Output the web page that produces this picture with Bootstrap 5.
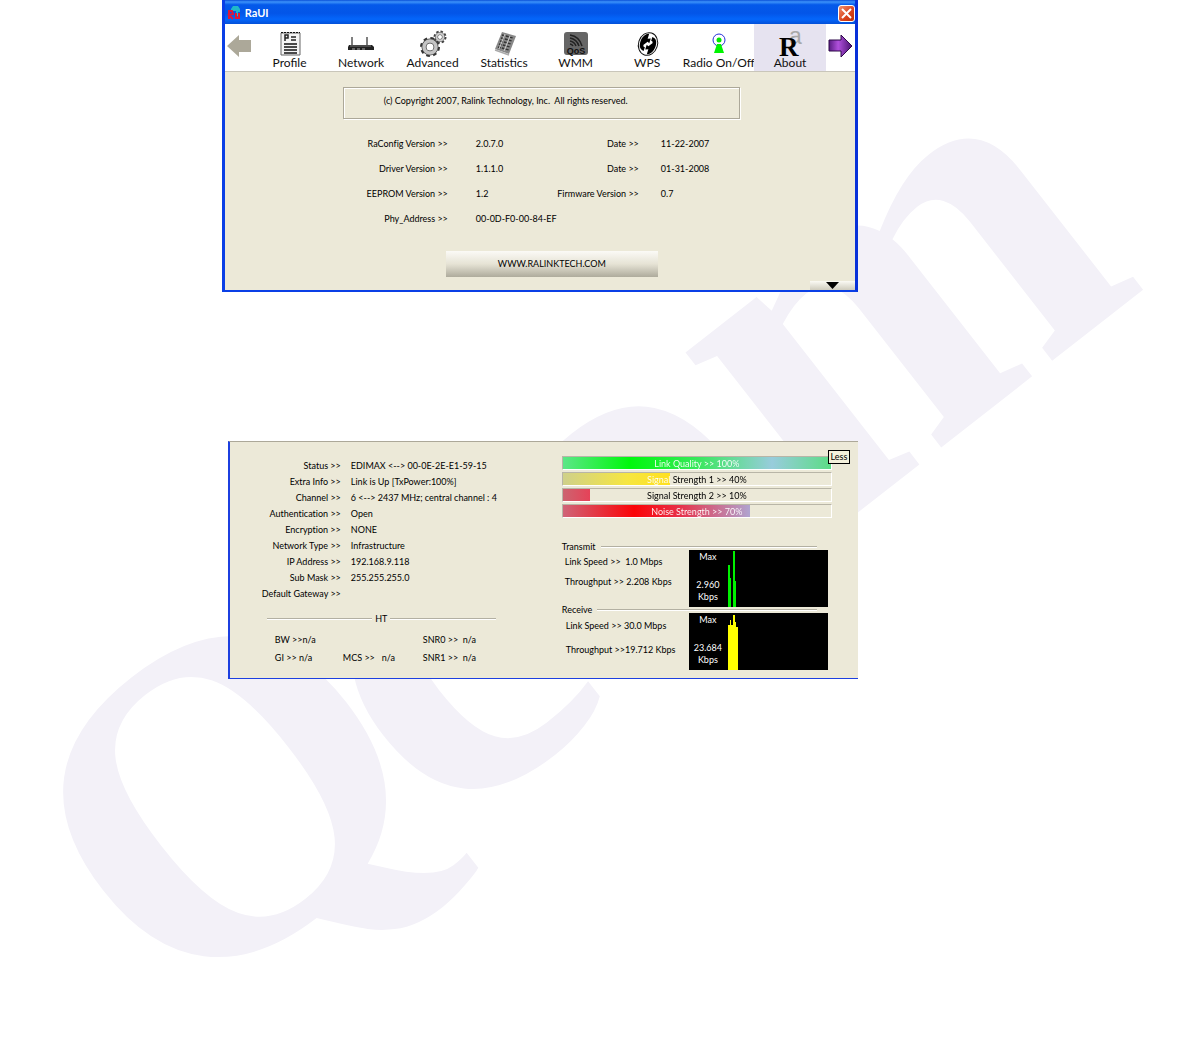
<!DOCTYPE html>
<html lang="en">
<head>
<meta charset="utf-8">
<meta name="viewport" content="width=device-width, initial-scale=1">
<title>RaUI</title>
<link rel="stylesheet" href="https://cdn.jsdelivr.net/npm/bootstrap@5.3.0/dist/css/bootstrap.min.css">
<style>
  body { background: #fff; font-family: Lato, "Open Sans", sans-serif; font-size: 9px; line-height: 16px; color: #000; font-variant-ligatures: none; }
  .page-area { min-height: 100vh; padding: 0 27.3% 0 18.8%; }
  .watermark { inset: 0; width: 100%; height: 1060px; z-index: 0; }
  .watermark text { font-family: "Liberation Serif", serif; font-weight: 700; fill: #f3f1f8; }
  .panels { z-index: 1; gap: 149px; min-width: 620px; }

  /* main window */
  .xp-window { background: #ece9d8; border: 3px solid #0a3fe6; border-top: 0; border-bottom-width: 2px; border-right-color: #0831d9; }
  .title-strip { height: 24px; padding: 2px 0 0 2px; background: linear-gradient(#0a50d8 0, #3c92fa 8%, #0459ea 20%, #0355e8 55%, #0466fb 80%, #0350d8 100%); color: #fff; font-weight: 700; font-size: 11px; }
  .close-btn { width: 17px; height: 17px; border: 1px solid #fff; border-radius: 3px; background: linear-gradient(135deg, #f0906c, #d9421c 60%, #c03008); }
  .tool-strip { background: #fff; height: 48px; border-bottom: 1px solid #c9c6ba; }
  .step-btn { width: 29px; height: 44px; border: 0; background: none; }
  .tool-btn { flex: 1 1 0; min-width: 0; border: 0; background: none; padding: 5px 0 0; font-size: 12px; line-height: 12px; white-space: nowrap; color: #111; }
  .tool-btn svg { width: 28px; height: 26px; overflow: visible; }
  .tool-btn.current { background: #e6e3f0; }
  .notice { width: 63%; height: 32px; margin: 15px auto 0 118px; border: 1px solid #aca899; box-shadow: 1px 1px 0 #fff, inset 1px 1px 0 #fff; padding: 5px 0 0 40px; }
  .versions { display: grid; grid-template-columns: minmax(0, 223fr) minmax(0, 104fr) minmax(0, 87fr) minmax(0, 216fr); line-height: 25px; margin-top: 12px; white-space: nowrap; }
  .versions dt, .facts dt { font-weight: 400; text-align: right; }
  .versions dd { margin: 0; padding-left: 28px; }
  .versions dd.near { padding-left: 22px; }
  .site-btn { display: block; width: 212px; height: 26px; border: 0; margin: 20px auto 0 221px; background: linear-gradient(#fbfaf6, #e6e3d5 50%, #aeab9c); }
  .drop-btn { display: block; width: 45px; height: 9px; margin: 4px 0 0 auto; border: 0; background: linear-gradient(#fbfaf4, #cfccbd); }

  /* status pane */
  .status-pane { background: #ece9d8; margin-left: 6px; border: solid #1c3fe0; border-width: 1px 0 1px 2px; border-top-color: #aca899; height: 238px; }
  .side-left { width: 332px; padding-top: 16px; }
  .side-right { flex: 1 1 0; padding: 14px 26px 0 0; }
  .facts { display: grid; grid-template-columns: 111px 1fr; margin: 0; white-space: nowrap; }
  .facts dd { margin: 0; padding-left: 10px; min-height: 16px; }
  .rule { height: 2px; flex: 1 1 0; background: linear-gradient(#b3b0a2 50%, #fff 50%); }
  .ht-head { margin: 9px 66px 0 37px; gap: 3px; }
  .ht-grid { display: grid; grid-template-columns: 68px 80px 1fr; line-height: 18px; margin: 4px 0 0 45px; white-space: pre; }
  .meter { height: 14px; margin-bottom: 2px; border: 1px solid #b8b5a7; border-right-color: #fff; border-bottom-color: #fff; background: #ece9d8; border-radius: 0; font-size: 9px; }
  .meter .progress-bar { background: var(--tone); }
  .meter-text { inset: 0; text-align: center; line-height: 13px; color: transparent; background: linear-gradient(90deg, #fff var(--v), #000 var(--v)); -webkit-background-clip: text; background-clip: text; }
  .tone-green { --tone: linear-gradient(90deg, #5ce688, #00f80c 25%, #38e85c 50%, #98ccdc 78%, #5cdc86); }
  .tone-yellow { --tone: linear-gradient(90deg, #cfd08a, #f6e640 60%, #ffe020); }
  .tone-red { --tone: linear-gradient(90deg, #cc6470, #e64258); }
  .tone-noise { --tone: linear-gradient(90deg, #d06478, #fb0408 38%, #e83048 62%, #b0a4d0); }
  .less-btn { top: 8px; right: 8px; width: 22px; height: 14px; border: 1px solid #000; background: #f4f1dc; padding: 0; line-height: 12px; }
  .flow-head { height: 6px; line-height: 6px; gap: 5px; margin-right: 15px; }
  .flow-first { margin-top: 26px; }
  .flow-text { flex: 1 1 0; white-space: pre; }
  .scope { width: 139px; height: 57px; background: #000; color: #fff; margin-right: 4px; line-height: 12px; text-align: center; }
  .scope-text { width: 38px; padding-top: 1px; }
  .flow-text.gap-a { padding: 4px 0 0 3px; }
  .flow-text.gap-b { padding: 5px 0 0 4px; }
</style>
</head>
<body>
<main class="page-area position-relative overflow-hidden">
  <svg class="watermark position-absolute" viewBox="0 0 1180 1060" preserveAspectRatio="xMinYMin slice" aria-hidden="true">
    <g transform="rotate(-38)"><text x="-489" y="914" font-size="452">Q</text><text x="-168" y="932" font-size="506">com</text></g>
  </svg>
  <div class="panels position-relative d-flex flex-column">
    <section class="xp-window">
      <header class="title-strip d-flex align-items-center">
        <svg width="14" height="16" viewBox="0 0 14 16" aria-hidden="true"><path d="M4 4l2-3h5l2 3v3h-2v4H9V6H4z" fill="#20b8c8"/><path d="M2 14V6h3l1 3-4 1 4 4M9 8v5h3V8" stroke="#e01838" stroke-width="2" fill="none"/></svg>
        <span class="ms-1 me-auto">RaUI</span>
        <button class="close-btn p-0 d-flex align-items-center justify-content-center" type="button" aria-label="Close"><svg width="11" height="11" viewBox="0 0 11 11"><path d="M1 1l9 9M10 1l-9 9" stroke="#fff" stroke-width="2"/></svg></button>
      </header>
      <nav class="tool-strip d-flex" aria-label="Sections">
        <button class="step-btn p-0" type="button" aria-label="Previous"><svg width="25" height="24" viewBox="0 0 25 24"><path d="M0 12L12 1v5h12v12H12v5z" fill="#aca899"/></svg></button>
        <button class="tool-btn" type="button">
          <svg viewBox="0 0 28 26" class="d-block mx-auto"><path d="M5 2h19v22H5z" fill="#f4f4f4" stroke="#666"/><path d="M5 1.500h19" stroke="#111" stroke-dasharray="2 1"/><path d="M9 10V4h3v3H9M15 6h5M15 9h5" fill="none" stroke="#222" stroke-width="1.500"/><path d="M8 13h13M8 16h13M8 19h13M8 22h13" stroke="#111" stroke-width="1.500"/></svg>
          Profile</button>
        <button class="tool-btn" type="button">
          <svg viewBox="0 0 28 26" class="d-block mx-auto"><path d="M5 6v9M20 6v9" stroke="#555" stroke-width="1.500"/><path d="M2 14h23l2 2v3H1v-3z" fill="#222"/><path d="M3 15h21" stroke="#777"/><path d="M5 18h3M10 18h3M15 18h3" stroke="#aaa"/></svg>
          Network</button>
        <button class="tool-btn" type="button">
          <svg viewBox="0 0 28 26" class="d-block mx-auto"><g fill="none"><circle cx="11" cy="16" r="8" stroke="#333" stroke-width="4" stroke-dasharray="3.300 3"/><circle cx="11" cy="16" r="6" stroke="#444" stroke-width="5"/><circle cx="11" cy="16" r="6" stroke="#c4c4c4" stroke-width="3.500"/><circle cx="21" cy="6" r="5" stroke="#444" stroke-width="3" stroke-dasharray="2.200 1.700"/><circle cx="21" cy="6" r="3.500" stroke="#555" stroke-width="3"/><circle cx="21" cy="6" r="3.500" stroke="#ccc" stroke-width="2"/></g></svg>
          Advanced</button>
        <button class="tool-btn" type="button">
          <svg viewBox="0 0 28 26" class="d-block mx-auto"><path d="M12 1l14 4-7 18-14-5z" fill="#888"/><path d="M12 4l11 3M11 7l11 3M10 10l11 3M9 13l11 3M8 16l11 3" stroke="#333" stroke-width="1.500" stroke-dasharray="3 1"/><path d="M15 3l-6 15M20 5l-6 15" stroke="#ccc"/><path d="M5 19l14 5" stroke="#aaa" stroke-width="1.500"/></svg>
          Statistics</button>
        <button class="tool-btn" type="button">
          <svg viewBox="0 0 28 26" class="d-block mx-auto"><rect x="2" y="1" width="24" height="23" rx="3" fill="#666"/><g fill="none" stroke="#222" stroke-width="1.500"><path d="M8 4a15 15 0 0112 11M8 7a12 12 0 019 8M8 10a8 8 0 016 5M8 13a4 4 0 013 2"/></g><text x="14" y="23" text-anchor="middle" font-family="Liberation Sans, sans-serif" font-size="9" font-weight="700" fill="#111">QoS</text></svg>
          WMM</button>
        <button class="tool-btn" type="button">
          <svg viewBox="0 0 28 26" class="d-block mx-auto"><g transform="translate(1 0) rotate(18 14 13)"><ellipse cx="14" cy="13" rx="9.500" ry="11.500" fill="#fff" stroke="#111"/><path d="M12 3C6 5 5 13 7 18c1 2 3 3 5 3v-4c-2 0-2-1-2-2l3-4 2 1V7l-3 1zM16 23c6-2 7-10 5-15-1-2-3-3-5-3v4c2 0 2 1 2 2l-3 4-2-1v5l3-1z" fill="#000"/></g></svg>
          WPS</button>
        <button class="tool-btn" type="button">
          <svg viewBox="0 0 28 26" class="d-block mx-auto"><circle cx="14" cy="9" r="6" fill="#fff" stroke="#2430d8"/><circle cx="14" cy="9" r="2.500" fill="#00e800"/><path d="M12 13h4l3 9H9z" fill="#00f400"/></svg>
          Radio On/Off</button>
        <button class="tool-btn current" type="button" aria-current="page">
          <svg viewBox="0 0 28 26" class="d-block mx-auto"><text x="13" y="13" font-family="Liberation Sans, sans-serif" font-size="23" fill="#a8a8a8">a</text><text x="3" y="25" font-family="Liberation Serif, serif" font-size="27" font-weight="700" fill="#000">R</text></svg>
          About</button>
        <button class="step-btn p-0" type="button" aria-label="Next"><svg width="25" height="24" viewBox="0 0 25 24"><defs><linearGradient id="violet"><stop offset="0" stop-color="#5a1c84"/><stop offset=".4" stop-color="#b050dc"/><stop offset="1" stop-color="#481070"/></linearGradient></defs><path d="M24 12L13 1v5H1v11h12v6z" fill="url(#violet)" stroke="#2c0848"/></svg></button>
      </nav>
      <p class="notice mb-0">(c) Copyright 2007, Ralink Technology, Inc.&nbsp; All rights reserved.</p>
      <dl class="versions mb-0">
        <dt>RaConfig Version &gt;&gt;</dt><dd>2.0.7.0</dd><dt>Date &gt;&gt;</dt><dd class="near">11-22-2007</dd>
        <dt>Driver Version &gt;&gt;</dt><dd>1.1.1.0</dd><dt>Date &gt;&gt;</dt><dd class="near">01-31-2008</dd>
        <dt>EEPROM Version &gt;&gt;</dt><dd>1.2</dd><dt>Firmware Version &gt;&gt;</dt><dd class="near">0.7</dd>
        <dt>Phy_Address &gt;&gt;</dt><dd>00-0D-F0-00-84-EF</dd>
      </dl>
      <button class="site-btn p-0" type="button">WWW.RALINKTECH.COM</button>
      <button class="drop-btn p-0" type="button" aria-label="Show status"><svg class="d-block mx-auto" width="13" height="7" viewBox="0 0 13 7"><path d="M0 0h13L6.500 7z"/></svg></button>
    </section>

    <section class="status-pane d-flex position-relative">
      <div class="side-left">
        <dl class="facts">
          <dt>Status &gt;&gt;</dt><dd>EDIMAX &lt;--&gt; 00-0E-2E-E1-59-15</dd>
          <dt>Extra Info &gt;&gt;</dt><dd>Link is Up [TxPower:100%]</dd>
          <dt>Channel &gt;&gt;</dt><dd>6 &lt;--&gt; 2437 MHz; central channel : 4</dd>
          <dt>Authentication &gt;&gt;</dt><dd>Open</dd>
          <dt>Encryption &gt;&gt;</dt><dd>NONE</dd>
          <dt>Network Type &gt;&gt;</dt><dd>Infrastructure</dd>
          <dt>IP Address &gt;&gt;</dt><dd>192.168.9.118</dd>
          <dt>Sub Mask &gt;&gt;</dt><dd>255.255.255.0</dd>
          <dt>Default Gateway &gt;&gt;</dt><dd></dd>
        </dl>
        <div class="ht-head d-flex align-items-center"><span class="rule"></span>HT<span class="rule"></span></div>
        <div class="ht-grid"><span>BW &gt;&gt;n/a</span><span></span><span>SNR0 &gt;&gt;  n/a</span><span>GI &gt;&gt; n/a</span><span>MCS &gt;&gt;   n/a</span><span>SNR1 &gt;&gt;  n/a</span></div>
      </div>
      <div class="side-right">
        <div class="progress meter tone-green position-relative" style="--v:100%"><div class="progress-bar" style="width:100%"></div><span class="meter-text position-absolute">Link Quality &gt;&gt; 100%</span></div>
        <div class="progress meter tone-yellow position-relative" style="--v:40%"><div class="progress-bar" style="width:40%"></div><span class="meter-text position-absolute">Signal Strength 1 &gt;&gt; 40%</span></div>
        <div class="progress meter tone-red position-relative" style="--v:10%"><div class="progress-bar" style="width:10%"></div><span class="meter-text position-absolute">Signal Strength 2 &gt;&gt; 10%</span></div>
        <div class="progress meter tone-noise position-relative" style="--v:70%"><div class="progress-bar" style="width:70%"></div><span class="meter-text position-absolute">Noise Strength &gt;&gt; 70%</span></div>
        <div class="flow-head flow-first d-flex align-items-center">Transmit<span class="rule"></span></div>
        <div class="d-flex">
          <div class="flow-text gap-a"><div class="mb-1">Link Speed &gt;&gt;  1.0 Mbps</div><div>Throughput &gt;&gt; 2.208 Kbps</div></div>
          <div class="scope d-flex"><div class="scope-text"><div class="mb-3">Max</div><div>2.960</div><div>Kbps</div></div><svg width="12" height="57" viewBox="0 0 12 57" aria-hidden="true"><path d="M1 57V15h2v13h1v29zM6 57V1h2v30h1v26z" fill="#00f000"/></svg></div>
        </div>
        <div class="flow-head d-flex align-items-center">Receive<span class="rule"></span></div>
        <div class="d-flex">
          <div class="flow-text gap-b"><div class="mb-2">Link Speed &gt;&gt; 30.0 Mbps</div><div>Throughput &gt;&gt;19.712 Kbps</div></div>
          <div class="scope d-flex"><div class="scope-text"><div class="mb-3">Max</div><div>23.684</div><div>Kbps</div></div><svg width="12" height="57" viewBox="0 0 12 57" aria-hidden="true"><path d="M1 57V12h2V7h1v5h2V2h2v7h1v5h2v43z" fill="#ffff00"/></svg></div>
        </div>
      </div>
      <button class="less-btn position-absolute" type="button">Less</button>
    </section>
  </div>
</main>
<script src="https://cdn.jsdelivr.net/npm/bootstrap@5.3.0/dist/js/bootstrap.bundle.min.js"></script>
</body>
</html>
